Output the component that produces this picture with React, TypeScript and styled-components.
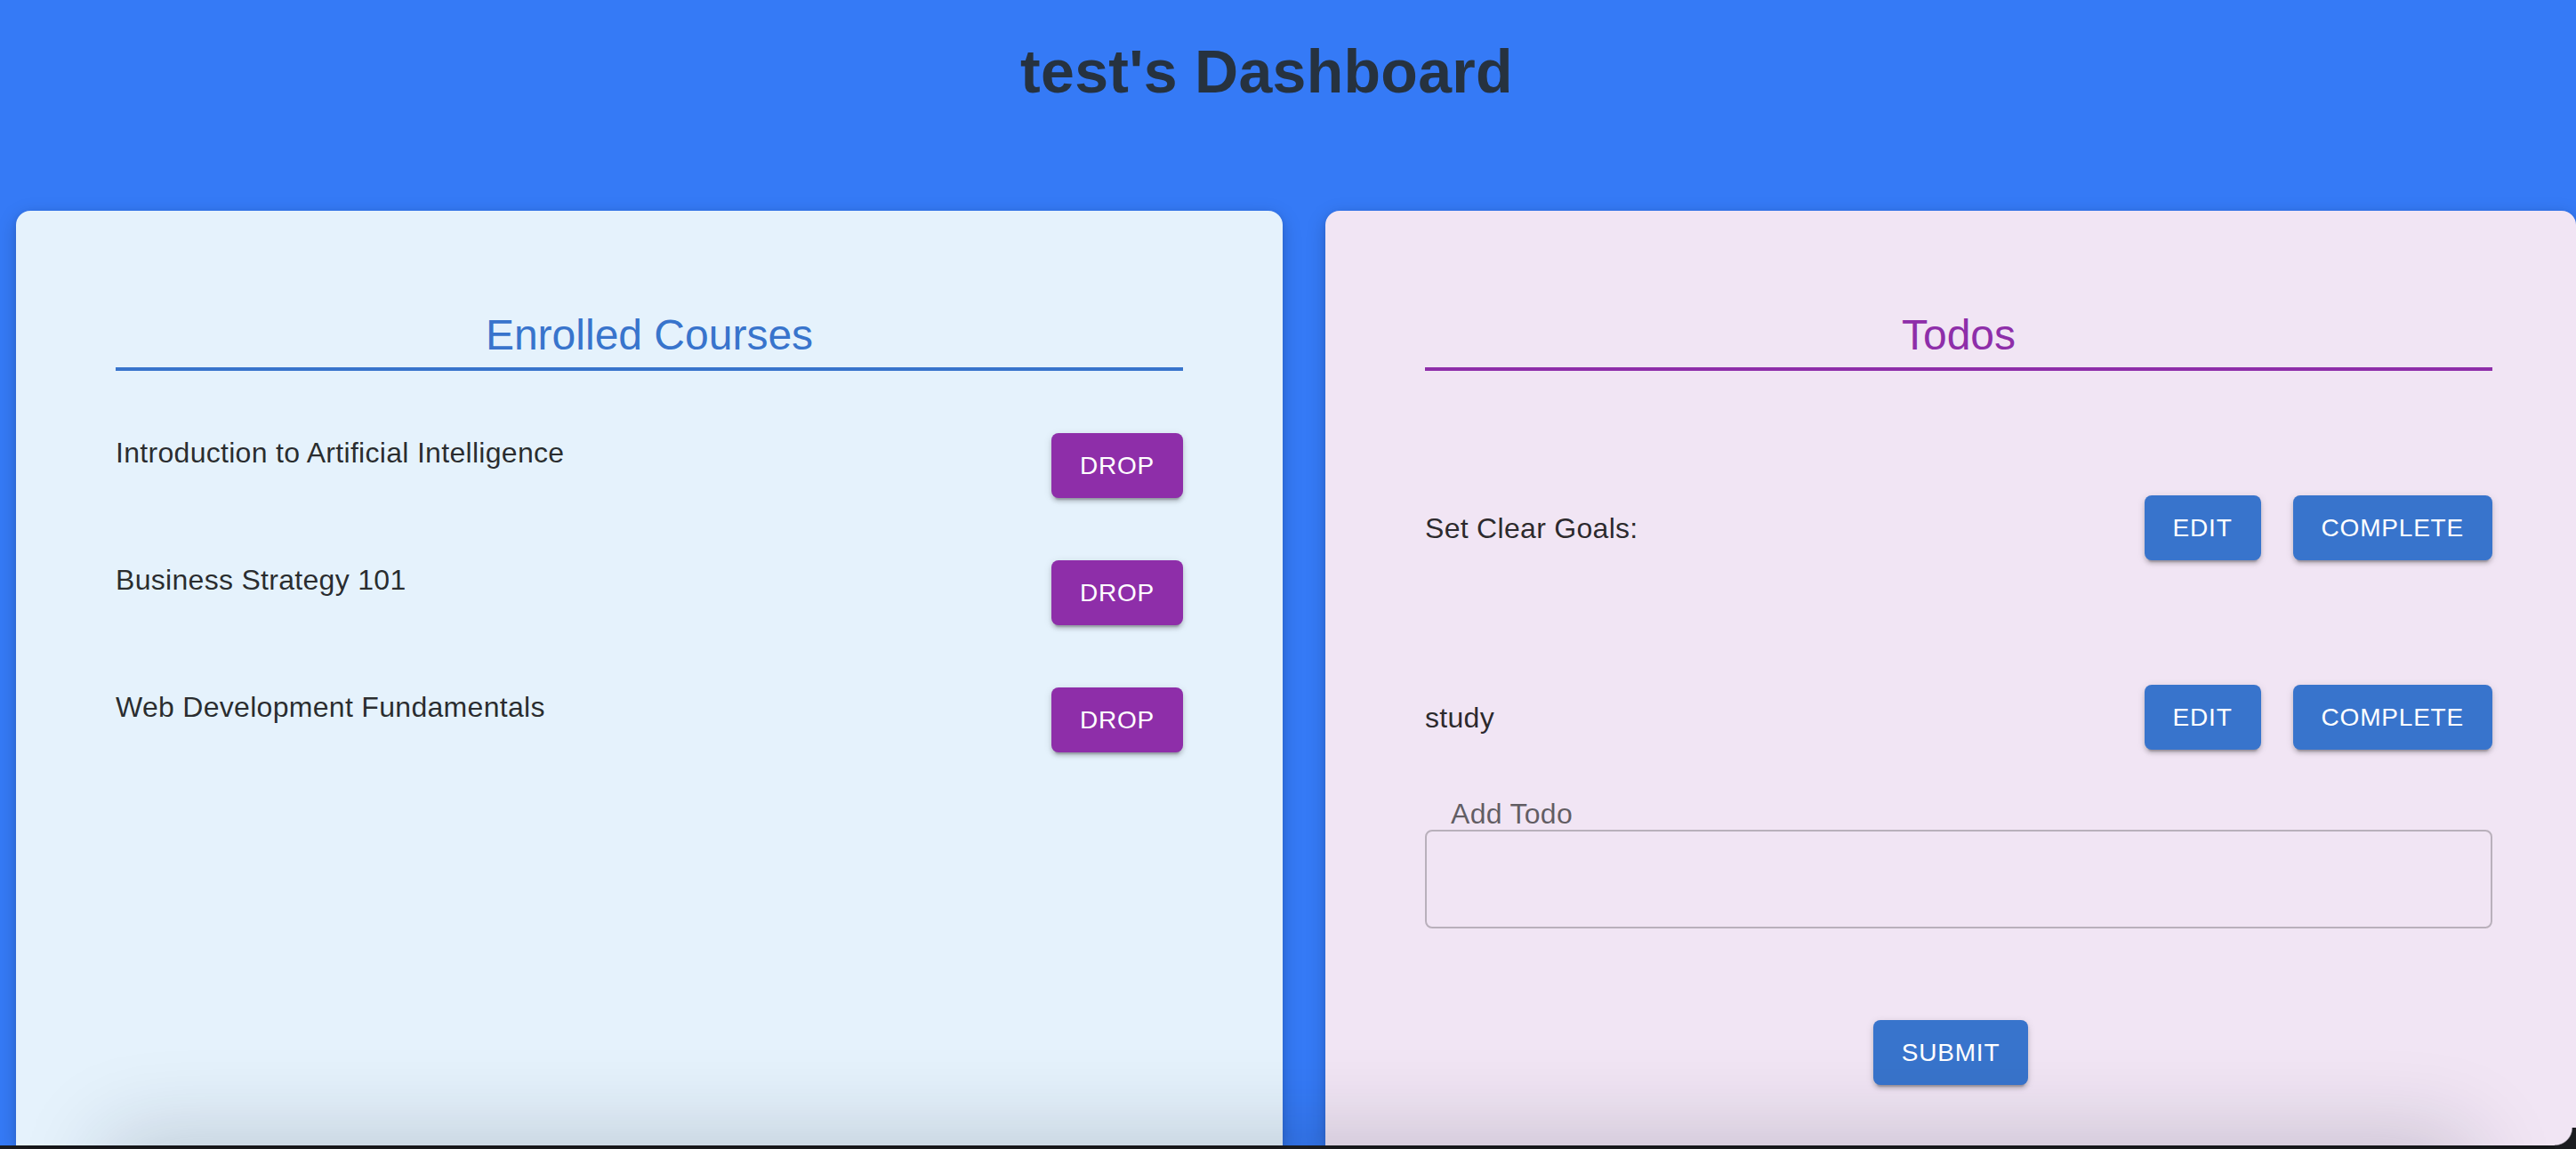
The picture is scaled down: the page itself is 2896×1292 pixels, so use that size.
import React from "react";
import styled, { createGlobalStyle } from "styled-components";

const GlobalStyle = createGlobalStyle`
  html, body {
    margin: 0;
    padding: 0;
    height: 100%;
    overflow: hidden;
  }
  body {
    background: #357af6;
    font-family: "Liberation Sans", Arial, Helvetica, sans-serif;
  }
`;

const Page = styled.div`
  position: relative;
  height: 100vh;
  display: flex;
  flex-direction: column;
  overflow: hidden;
  background: #357af6;
`;

const Header = styled.header`
  box-sizing: border-box;
  height: 237px;
  padding: 38px 48px 0 0;
  text-align: center;
  flex: none;
`;

const Title = styled.h1`
  margin: 0;
  font-size: 68px;
  line-height: 84px;
  font-weight: 700;
  letter-spacing: 0.3px;
  color: #26323f;
`;

const Columns = styled.main`
  flex: 1;
  min-height: 0;
  display: grid;
  grid-template-columns: 1424px 1fr;
  column-gap: 48px;
  padding-left: 18px;
`;

const Card = styled.section<{ $bg: string }>`
  position: relative;
  background: ${(p) => p.$bg};
  border-radius: 16px 16px 0 0;
  padding-top: 108px;
  box-shadow: 0 6px 22px rgba(0, 0, 0, 0.18), 0 2px 6px rgba(0, 0, 0, 0.1);
`;

const Content = styled.div`
  margin-left: 112px;
  width: 1200px;
`;

const SectionTitle = styled.h2<{ $color: string }>`
  margin: 0;
  text-align: center;
  font-size: 48px;
  line-height: 64px;
  font-weight: 400;
  color: ${(p) => p.$color};
  padding-bottom: 4px;
  border-bottom: 4px solid ${(p) => p.$color};
`;

const Row = styled.div<{ $gap: number; $align: string }>`
  display: flex;
  justify-content: space-between;
  align-items: ${(p) => p.$align};
  margin-top: ${(p) => p.$gap}px;
`;

const ItemText = styled.span<{ $lift?: number }>`
  font-size: 32px;
  line-height: 48px;
  letter-spacing: 0.3px;
  color: rgba(0, 0, 0, 0.84);
  margin-top: ${(p) => (p.$lift ? -p.$lift : 0)}px;
`;

const Actions = styled.div`
  display: flex;
  gap: 36px;
`;

const Button = styled.button<{ $color: string }>`
  box-sizing: border-box;
  height: 73px;
  padding: 0 32px;
  border: none;
  border-radius: 8px;
  background: ${(p) => p.$color};
  color: #ffffff;
  font-family: "Liberation Sans", Arial, Helvetica, sans-serif;
  font-size: 28px;
  font-weight: 400;
  letter-spacing: 0.8px;
  text-transform: uppercase;
  cursor: pointer;
  box-shadow: 0 6px 2px -4px rgba(0, 0, 0, 0.2), 0 4px 4px 0 rgba(0, 0, 0, 0.14),
    0 2px 10px 0 rgba(0, 0, 0, 0.12);
`;

const Field = styled.div`
  margin-top: 54px;
`;

const FieldLabel = styled.label`
  display: block;
  padding-left: 29px;
  font-size: 32px;
  line-height: 36px;
  letter-spacing: 0.3px;
  color: rgba(0, 0, 0, 0.6);
`;

const FieldBox = styled.input`
  display: block;
  box-sizing: border-box;
  width: 100%;
  height: 111px;
  margin: 0;
  border: 2px solid rgba(0, 0, 0, 0.23);
  border-radius: 8px;
  background: transparent;
  padding: 0 28px;
  font-family: "Liberation Sans", Arial, Helvetica, sans-serif;
  font-size: 32px;
  outline: none;
`;

const SubmitRow = styled.div`
  display: flex;
  justify-content: center;
  margin-top: 103px;
`;

const BottomStrip = styled.div`
  flex: none;
  height: 4px;
  background: #1b1c20;
`;

const Shade = styled.div`
  position: absolute;
  left: 130px;
  right: 130px;
  bottom: -96px;
  height: 100px;
  pointer-events: none;
  box-shadow: 0 0 100px 10px rgba(20, 30, 50, 0.2);
`;

const Corner = styled.div`
  position: absolute;
  right: 0;
  bottom: 0;
  width: 24px;
  height: 24px;
  pointer-events: none;
  background: radial-gradient(circle at 0 0, transparent 19px, #1b1c20 20.5px);
`;

const courses = [
  "Introduction to Artificial Intelligence",
  "Business Strategy 101",
  "Web Development Fundamentals",
];

const todos = ["Set Clear Goals:", "study"];

const BLUE = "#3874cc";
const PURPLE = "#8e2ea9";

export default function App() {
  return (
    <>
      <GlobalStyle />
      <Page>
        <Header>
          <Title>test's Dashboard</Title>
        </Header>
        <Columns>
          <Card $bg="#e5f2fc">
            <Content>
              <SectionTitle $color={BLUE}>Enrolled Courses</SectionTitle>
              {courses.map((c) => (
                <Row key={c} $gap={70} $align="flex-start">
                  <ItemText $lift={2}>{c}</ItemText>
                  <Button $color={PURPLE}>Drop</Button>
                </Row>
              ))}
            </Content>
          </Card>
          <Card $bg="#f1e5f4">
            <Content>
              <SectionTitle $color={PURPLE}>Todos</SectionTitle>
              {todos.map((t) => (
                <Row key={t} $gap={140} $align="center">
                  <ItemText>{t}</ItemText>
                  <Actions>
                    <Button $color={BLUE}>Edit</Button>
                    <Button $color={BLUE}>Complete</Button>
                  </Actions>
                </Row>
              ))}
              <Field>
                <FieldLabel htmlFor="add-todo">Add Todo</FieldLabel>
                <FieldBox id="add-todo" type="text" />
              </Field>
            </Content>
            <SubmitRow>
              <Button $color={BLUE}>Submit</Button>
            </SubmitRow>
          </Card>
        </Columns>
        <BottomStrip />
        <Shade />
        <Corner />
      </Page>
    </>
  );
}
